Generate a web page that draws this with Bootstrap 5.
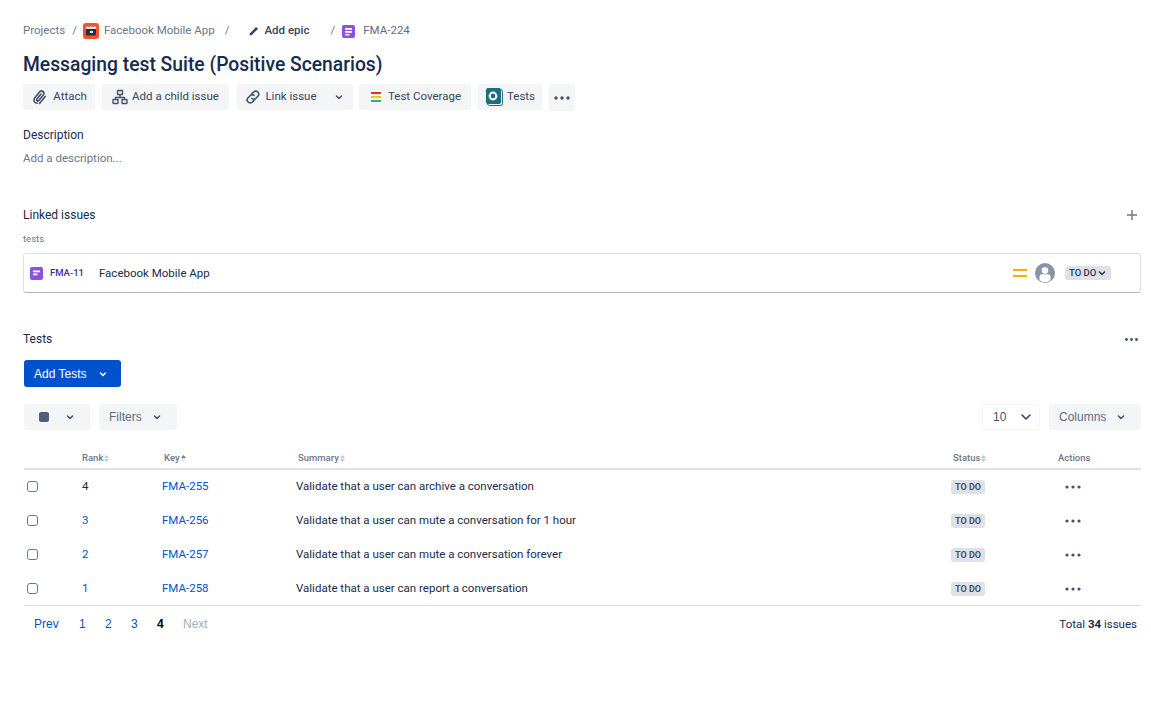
<!DOCTYPE html>
<html lang="en">
<head>
  <meta charset="UTF-8" />
  <meta name="viewport" content="width=device-width, initial-scale=1" />
  <title>FMA-224</title>
  <link href="https://cdn.jsdelivr.net/npm/bootstrap@5.3.0/dist/css/bootstrap.min.css" rel="stylesheet" />
  <style>
    body {
      font-family: Roboto, "Noto Sans", sans-serif;
      font-size: 11.5px;
      color: #172b4d;
      background: #fff;
    }
    .page-wrap { padding: 21px 10px 0 23px; }

    .crumbs { height: 20px; font-size: 11.5px; color: #6b778c; margin-bottom: 0; }
    .crumbs .sep { color: #6b778c; margin: 0 7px 0 8px; }
    .crumbs .sep-first { margin: 0 6px 0 7px; }
    .crumbs .sep-wide { margin: 0 19px 0 10px; }
    .crumbs a { color: #6b778c; text-decoration: none; }
    .crumbs .logo-ico { margin-right: 5px; }
    .crumbs .epic { color: #344563; font-weight: 500; margin: 0 13px 0 4px; }
    .crumbs .key { color: #5e6c84; }

    .issue-title { font-size: 19.3px; font-weight: 500; line-height: 26px; margin: 11px 0 6px; color: #172b4d; }

    .tool-btn {
      background: #f4f5f7; color: #344563; border: 0; border-radius: 3px;
      height: 26px; padding: 0; font-size: 11.5px; font-weight: 400;
      display: inline-flex; align-items: center; justify-content: center; gap: 4px; --bs-btn-hover-bg: #ebecf0;
    }
    .btn-attach { width: 72px; }
    .btn-child { width: 127px; }
    .btn-group { margin-left: 1px; }
    .btn-group .joined-l { width: 89px; border-radius: 3px 0 0 3px; border-right: 1px solid #dfe1e6; }
    .btn-group .joined-r { width: 28px; border-radius: 0 3px 3px 0; }
    .cov-btn { width: 112px; gap: 7px; margin-left: -1px; padding-left: 12px; justify-content: flex-start; }
    .tests-btn { width: 64px; gap: 4px; padding-left: 8px; justify-content: flex-start; }
    .more-btn { width: 26px; height: 27px; }
    .tool-row { gap: 7px; }

    .field-label { font-size: 12px; font-weight: 400; color: #172b4d; line-height: 16px; }
    .muted-text { color: #6b778c; font-size: 11.5px; margin-top: 7px; }
    .desc-block { margin-top: 16px; }
    .linked-block { margin-top: 40px; }
    .plus-ico { margin-right: 3px; }
    .tests-label { font-size: 9.5px; color: #6b778c; line-height: 14px; margin-top: 9px; }

    .linked-card { height: 40px; margin-top: 7px; border: 1px solid #dfe1e6; border-bottom-color: #b3bac5; border-radius: 3px; padding: 0 29px 0 6px; }
    .linked-key { color: #403294; font-size: 9.5px; font-weight: 500; margin: 0 15px 0 7px; }
    .todo-pill { background: #dfe1e6; color: #253858; font-size: 9.5px; font-weight: 500; border-radius: 3px; padding: 0 0 0 4px; width: 46px; height: 14px; display: inline-flex; align-items: center; justify-content: flex-start; gap: 2px; margin-left: 10px; }

    .tests-block { margin-top: 38px; }
    .dots-ico { margin-right: 3px; }
    .add-tests { background: #0052cc; color: #fff; border: 0; border-radius: 3px; width: 97px; height: 27px; margin: 13px 0 17px 1px; padding: 0 0 0 10px; font-family: "Liberation Sans", sans-serif; font-size: 12px; display: flex; align-items: center; justify-content: flex-start; gap: 12px; --bs-btn-hover-bg: #0047b3; --bs-btn-hover-color: #fff; }
    .tool-select { background: #f4f5f7; color: #5e6c84; border: 0; border-radius: 3px; height: 26px; font-family: "Liberation Sans", sans-serif; font-size: 12px; display: inline-flex; align-items: center; padding: 0; }
    .select-square { width: 66px; margin-left: 1px; padding-left: 15px; gap: 16px; }
    .select-filters { width: 78px; margin-left: 9px; padding-left: 10px; gap: 10px; }
    .size-select { background: #fff; border: 1px solid #f4f5f7; color: #42526e; width: 58px; justify-content: space-between; padding: 0 7px 0 10px; }
    .select-columns { width: 92px; margin-left: 9px; padding-left: 10px; gap: 10px; }
    .square-ico { width: 10px; height: 10px; background: #505f79; border-radius: 2px; }

    .issue-table { width: 1117px; margin: 18px 0 0 1px; table-layout: fixed; --bs-table-border-color: transparent; }
    .issue-table > :not(caption) > * > * { padding: 0; border-bottom: 0; color: #172b4d; background: transparent; box-shadow: none; }
    .issue-table thead th { height: 21px; padding-top: 4px; font-size: 9.5px; font-weight: 500; color: #6b778c; vertical-align: top; border-bottom: 2px solid #dfe1e6; line-height: 11px; }
    .issue-table tbody td { height: 34px; vertical-align: middle; font-size: 11.5px; }
    .issue-table a { color: #0052cc; text-decoration: none; }
    .sort-arrows { display: inline-block; vertical-align: middle; margin-left: 1px; }
    .row-check { width: 11px; height: 11px; margin: 0 0 0 3px; border: 1px solid #6b778c; border-radius: 2px; display: block; }
    .status-pill { background: #dfe1e6; color: #42526e; font-size: 9px; font-weight: 700; border-radius: 3px; padding: 0 4px; line-height: 14px; display: inline-block; }
    .issue-table th.th-shift { padding-left: 2px; }
    .issue-table td.act-cell { padding-left: 7px; }

    .table-foot { border-top: 1px solid #dfe1e6; width: 1117px; margin-left: 1px; padding: 9px 4px 0 10px; font-family: "Liberation Sans", sans-serif; font-size: 12px; }
    .pager a { color: #0052cc; text-decoration: none; display: block; width: 26px; }
    .pager .prev-link { width: 45px; }
    .pager .now-page { color: #000; font-weight: 700; }
    .pager .off-page { color: #a5adba; }
    .foot-total { color: #172b4d; font-family: Roboto, sans-serif; font-size: 11.5px; }
  </style>
</head>
<body>
<div class="page-wrap">

  <div class="crumbs d-flex align-items-center">
    <a href="#">Projects</a><span class="sep sep-first">/</span>
    <svg width="16" height="16" viewBox="0 0 16 16" class="logo-ico"><rect width="16" height="16" rx="3" fill="#f1532b"/><rect x="3" y="3.500" width="10" height="9" rx="1" fill="#1f2f4d"/><rect x="3" y="3.500" width="10" height="2.500" fill="#f6d9c8"/><rect x="7" y="8" width="3" height="2" fill="#fff"/></svg>
    <a href="#">Facebook Mobile App</a><span class="sep sep-wide">/</span>
    <svg width="12" height="12" viewBox="0 0 12 12"><path d="M2 8.200 7.600 2.600a1 1 0 0 1 1.400 0l.4.4a1 1 0 0 1 0 1.400L3.800 10l-2.300.5z" fill="#344563"/></svg>
    <span class="epic">Add epic</span><span class="sep">/</span>
    <svg width="13" height="13" viewBox="0 0 13 13" class="me-2"><rect width="13" height="13" rx="2" fill="#904ee2"/><rect x="3" y="3" width="7" height="1.800" fill="#fff"/><rect x="3" y="6" width="7" height="1.800" fill="#fff"/><rect x="3" y="9" width="4.500" height="1.400" fill="#fff"/></svg>
    <a href="#" class="key">FMA-224</a>
  </div>

  <h1 class="issue-title">Messaging test Suite (Positive Scenarios)</h1>

  <div class="d-flex tool-row align-items-start">
    <button class="btn tool-btn btn-attach">
      <svg width="18" height="18" viewBox="0 0 18 18" fill="none" stroke="#42526e" stroke-width="1.600" stroke-linecap="round"><path d="M6.200 15.200a3.200 3.200 0 0 1-2.700-5l5-6.300a2.400 2.400 0 0 1 3.800 3L7.800 12.600a1.200 1.200 0 0 1-1.900-1.500L10 6"/><path d="M8.500 15.400l5.700-7"/></svg>Attach
    </button>
    <button class="btn tool-btn btn-child">
      <svg width="16" height="16" viewBox="0 0 16 16" fill="none" stroke="#42526e" stroke-width="1.400"><rect x="5.500" y="1.500" width="5" height="4" rx=".6"/><rect x="1" y="10.500" width="5" height="4" rx=".6"/><rect x="10" y="10.500" width="5" height="4" rx=".6"/><path d="M8 5.500v3M3.500 10.500v-2h9v2"/></svg>Add a child issue
    </button>
    <div class="btn-group">
      <button class="btn tool-btn joined-l">
        <svg width="16" height="16" viewBox="0 0 16 16" fill="none" stroke="#42526e" stroke-width="1.600" stroke-linecap="round"><path d="M7 4.600l1.600-1.600a3 3 0 0 1 4.300 4.300l-2 2a3 3 0 0 1-4 .2"/><path d="M9 11.400L7.400 13a3 3 0 0 1-4.300-4.300l2-2a3 3 0 0 1 4-.2"/></svg>Link issue
      </button>
      <button class="btn tool-btn joined-r" aria-label="More link options">
        <svg width="10" height="10" viewBox="0 0 10 10" fill="none" stroke="#42526e" stroke-width="1.500" stroke-linecap="round" stroke-linejoin="round"><path d="M2.500 4l2.500 2.500L7.500 4"/></svg>
      </button>
    </div>
    <button class="btn tool-btn cov-btn">
      <svg width="10" height="12" viewBox="0 0 10 12"><rect y="1" width="10" height="2" fill="#de350b"/><rect y="5" width="10" height="2" fill="#ffc400"/><rect y="9" width="10" height="2" fill="#36b37e"/></svg>
      Test Coverage
    </button>
    <button class="btn tool-btn tests-btn">
      <svg width="17" height="18" viewBox="0 0 17 18"><rect x="1.500" y="1.500" width="15" height="16" rx="2" fill="none" stroke="#1b6f7d"/><rect width="15" height="16" rx="2" fill="#1b6f7d"/><circle cx="7" cy="8" r="3.400" fill="none" stroke="#fff" stroke-width="2"/></svg>Tests
    </button>
    <button class="btn tool-btn more-btn" aria-label="More">
      <svg width="16" height="4" viewBox="0 0 16 4" fill="#42526e"><circle cx="2" cy="2" r="1.700"/><circle cx="8" cy="2" r="1.700"/><circle cx="14" cy="2" r="1.700"/></svg>
    </button>
  </div>

  <div class="desc-block">
    <div class="field-label">Description</div>
    <div class="muted-text">Add a description...</div>
  </div>

  <div class="linked-block">
    <div class="d-flex justify-content-between align-items-center">
      <div class="field-label">Linked issues</div>
      <svg width="12" height="12" viewBox="0 0 12 12" stroke="#6b778c" stroke-width="1.400" class="plus-ico"><path d="M6 1v10M1 6h10"/></svg>
    </div>
    <div class="tests-label">tests</div>
    <div class="linked-card d-flex align-items-center">
      <svg width="13" height="13" viewBox="0 0 13 13"><rect width="13" height="13" rx="2" fill="#904ee2"/><rect x="3" y="3.500" width="7" height="1.800" fill="#fff"/><rect x="3" y="6.500" width="4.500" height="1.800" fill="#fff"/></svg>
      <span class="linked-key">FMA-11</span>
      <span>Facebook Mobile App</span>
      <svg width="14" height="9" viewBox="0 0 14 9" class="ms-auto" fill="#ffab00"><rect width="14" height="2"/><rect y="6" width="14" height="2"/></svg>
      <svg width="20" height="20" viewBox="0 0 20 20" class="ms-2"><circle cx="10" cy="10" r="10" fill="#8993a4"/><circle cx="10" cy="7.500" r="3.300" fill="#fff"/><path d="M4.500 13.500a2.500 2.500 0 0 1 2.500-2.200h6a2.500 2.500 0 0 1 2.500 2.200V17a8 8 0 0 1-11 0z" fill="#fff"/></svg>
      <span class="todo-pill">TO DO
        <svg width="8" height="8" viewBox="0 0 8 8" fill="none" stroke="#253858" stroke-width="1.500"><path d="M1 2.500l3 3 3-3"/></svg>
      </span>
    </div>
  </div>

  <div class="tests-block">
    <div class="d-flex justify-content-between align-items-center">
      <div class="field-label">Tests</div>
      <svg width="13" height="3" viewBox="0 0 13 3" fill="#42526e" class="dots-ico"><circle cx="1.500" cy="1.500" r="1.400"/><circle cx="6.500" cy="1.500" r="1.400"/><circle cx="11.500" cy="1.500" r="1.400"/></svg>
    </div>

    <button class="btn add-tests">Add Tests
      <svg width="10" height="10" viewBox="0 0 10 10" fill="none" stroke="#fff" stroke-width="1.500" stroke-linecap="round" stroke-linejoin="round"><path d="M2.500 4l2.500 2.500L7.500 4"/></svg>
    </button>

    <div class="d-flex align-items-center toolbar-row">
      <div class="tool-select select-square"><span class="square-ico"></span>
        <svg width="10" height="10" viewBox="0 0 10 10" fill="none" stroke="#42526e" stroke-width="1.500" stroke-linecap="round" stroke-linejoin="round"><path d="M2.500 4l2.500 2.500L7.500 4"/></svg>
      </div>
      <div class="tool-select select-filters">Filters
        <svg width="10" height="10" viewBox="0 0 10 10" fill="none" stroke="#42526e" stroke-width="1.500" stroke-linecap="round" stroke-linejoin="round"><path d="M2.500 4l2.500 2.500L7.500 4"/></svg>
      </div>
      <div class="tool-select size-select ms-auto">10
        <svg width="12" height="12" viewBox="0 0 12 12" fill="none" stroke="#344563" stroke-width="1.600" stroke-linecap="round" stroke-linejoin="round"><path d="M2 4l4 4 4-4"/></svg>
      </div>
      <div class="tool-select select-columns">Columns
        <svg width="10" height="10" viewBox="0 0 10 10" fill="none" stroke="#42526e" stroke-width="1.500" stroke-linecap="round" stroke-linejoin="round"><path d="M2.500 4l2.500 2.500L7.500 4"/></svg>
      </div>
    </div>

    <table class="table issue-table mb-0">
      <colgroup>
        <col style="width: 58px"><col style="width: 80px"><col style="width: 134px"><col style="width: 655px"><col style="width: 107px"><col>
      </colgroup>
      <thead>
        <tr>
          <th></th>
          <th>Rank<svg class="sort-arrows" width="5" height="7" viewBox="0 0 5 7" fill="#c1c7d0"><path d="M2.500 0 5 3H0zM2.500 7 0 4h5z"/></svg></th>
          <th class="th-shift">Key<svg class="sort-arrows" width="5" height="7" viewBox="0 0 5 7"><path d="M2.500 0 5 3H0z" fill="#6b778c"/><path d="M2.500 7 0 4h5z" fill="#dfe1e6"/></svg></th>
          <th class="th-shift">Summary<svg class="sort-arrows" width="5" height="7" viewBox="0 0 5 7" fill="#c1c7d0"><path d="M2.500 0 5 3H0zM2.500 7 0 4h5z"/></svg></th>
          <th class="th-shift">Status<svg class="sort-arrows" width="5" height="7" viewBox="0 0 5 7" fill="#c1c7d0"><path d="M2.500 0 5 3H0zM2.500 7 0 4h5z"/></svg></th>
          <th>Actions</th>
        </tr>
      </thead>
      <tbody id="rows"></tbody>
    </table>

    <div class="table-foot d-flex justify-content-between align-items-center">
      <div class="pager d-flex">
        <a href="#" class="prev-link">Prev</a>
        <a href="#">1</a><a href="#">2</a><a href="#">3</a>
        <a href="#" class="now-page">4</a>
        <a href="#" class="off-page">Next</a>
      </div>
      <div class="foot-total">Total <b>34</b> issues</div>
    </div>
  </div>
</div>

<script src="https://cdn.jsdelivr.net/npm/bootstrap@5.3.0/dist/js/bootstrap.bundle.min.js"></script>
<script>
  const tests = [
    { rank: "4", key: "FMA-255", summary: "Validate that a user can archive a conversation", plain: true },
    { rank: "3", key: "FMA-256", summary: "Validate that a user can mute a conversation for 1 hour" },
    { rank: "2", key: "FMA-257", summary: "Validate that a user can mute a conversation forever" },
    { rank: "1", key: "FMA-258", summary: "Validate that a user can report a conversation" }
  ];
  const dots = '<svg width="16" height="4" viewBox="0 0 16 4" fill="#42526e"><circle cx="2" cy="2" r="1.600"/><circle cx="8" cy="2" r="1.600"/><circle cx="14" cy="2" r="1.600"/></svg>';
  document.getElementById("rows").innerHTML = tests.map(t => `
    <tr>
      <td><input type="checkbox" class="form-check-input row-check" aria-label="Select ${t.key}"></td>
      <td>${t.plain ? t.rank : '<a href="#">' + t.rank + '</a>'}</td>
      <td><a href="#">${t.key}</a></td>
      <td>${t.summary}</td>
      <td><span class="status-pill">TO DO</span></td>
      <td class="act-cell">${dots}</td>
    </tr>`).join("");
</script>
</body>
</html>
